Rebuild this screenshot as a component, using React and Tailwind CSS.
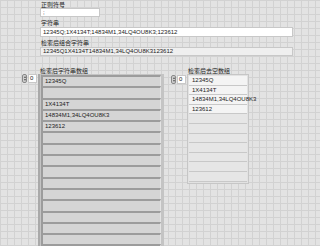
const grid =
  "bg-[#e3e3e3] bg-[linear-gradient(to_right,#d2d2d2_1px,transparent_1px),linear-gradient(to_bottom,#d2d2d2_1px,transparent_1px)] bg-[size:7px_7px]";

const Label = ({ children, className = "" }) => (
  <div className={`text-[6px] leading-[7px] text-[#222] font-['Noto_Sans_CJK_SC',sans-serif] ${className}`}>{children}</div>
);

const IndexBox = () => (
  <div className="flex items-center h-[9px]">
    <div className="w-[5px] h-[9px] rounded-[2px] border border-[#888] bg-[#cfcfcf] flex flex-col justify-between items-center py-[1px]">
      <div className="w-0 h-0 border-l-[1.5px] border-r-[1.5px] border-b-[2px] border-l-transparent border-r-transparent border-b-[#555]" />
      <div className="w-0 h-0 border-l-[1.5px] border-r-[1.5px] border-t-[2px] border-l-transparent border-r-transparent border-t-[#555]" />
    </div>
    <div className="w-[9px] h-[9px] bg-white border border-[#c8c8c8] ml-[1px] text-[6px] leading-[7px] pl-[1px] font-['Liberation_Sans',sans-serif]">0</div>
  </div>
);

const strs1 = ["12345Q", "", "1X4134T", "14834M1,34LQ4OU8K3", "123612", "", "", "", "", "", "", "", "", "", "", ""];
const strs2 = ["12345Q", "1X4134T", "14834M1,34LQ4OU8K3", "123612", "", "", "", "", "", "", ""];

export default function App() {
  return (
    <div className={`w-[320px] h-[246px] overflow-hidden ${grid} font-['Liberation_Sans',sans-serif] text-[#222]`}>
      <div className="pl-[40px] pt-[1px]">
        <Label className="pl-[1px]">正则符号</Label>
        <div className="w-[60px] h-[9px] bg-white border border-[#c8c8c8] text-[6px] leading-[7px] pl-[2px]">;</div>
        <Label className="pl-[1px] mt-[2px]">字符串</Label>
        <div className="mt-[1px] w-[253px] h-[10px] bg-white border border-[#c8c8c8] text-[6px] leading-[8px] pl-[2px]">12345Q;1X4134T;14834M1,34LQ4OU8K3;123612</div>
        <Label className="pl-[1px] mt-[2px]">检索后组合字符串</Label>
        <div className="mt-[1px] w-[253px] h-[9px] bg-[#efefef] border border-[#c8c8c8] text-[6px] leading-[7px] pl-[2px]">12345Q1X4134T14834M1,34LQ4OU8K3123612</div>
      </div>
      <div className="flex mt-[11px]">
        <div className="flex pl-[22px]">
          <div className="pt-[7px]"><IndexBox /></div>
          <div className="ml-[1px]">
            <Label className="pl-[2px]">检索后字符串数组</Label>
            <div className="w-[126px] bg-[#c4c4c4] border-l-2 border-[#a9a9a9] pl-[1px] pr-[3px] pt-[1px] flex flex-col">
              {strs1.map((s, i) => (
                <div key={i} className="h-[11.3px] bg-[#d5d5d5] border-t-2 border-l-2 border-[#9c9c9c] border-r border-r-[#e4e4e4] text-[6px] leading-[8px] pl-[2px]">{s}</div>
              ))}
            </div>
          </div>
        </div>
        <div className="flex ml-[7px]">
          <div className="pt-[8px]"><IndexBox /></div>
          <div className="ml-[1px]">
            <Label className="pl-[1px]">检索后去空数组</Label>
            <div className="w-[62px] bg-[#e2e2e2] border border-[#c6c6c6] p-[1px] flex flex-col">
              {strs2.map((s, i) => (
                <div key={i} className={`h-[9.6px] border-b border-[#c8c8c8] text-[6px] leading-[9px] pl-[3px] ${s ? "bg-[#f4f4f4]" : "bg-[#e6e6e6]"}`}>{s}</div>
              ))}
            </div>
          </div>
        </div>
      </div>
    </div>
  );
}
